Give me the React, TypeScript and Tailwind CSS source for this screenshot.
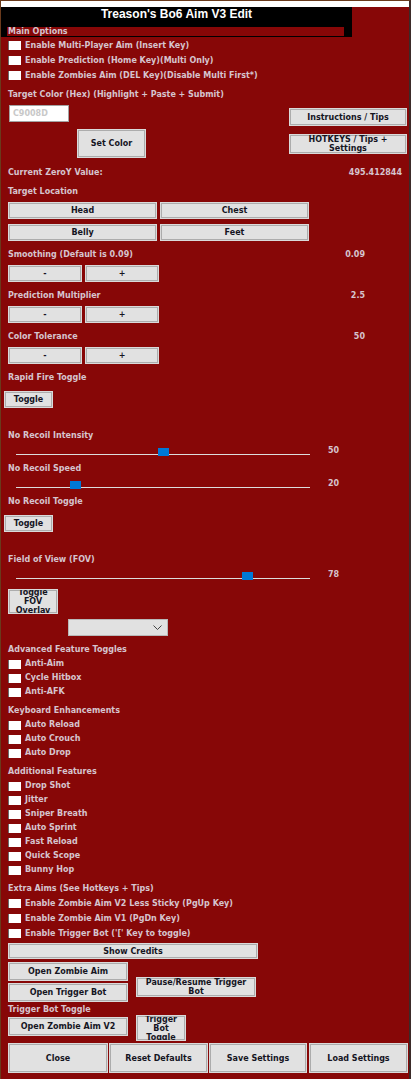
import React from "react";

type BtnProps = { className?: string; children?: React.ReactNode };

function Btn({ className = "", children }: BtnProps) {
  return (
    <div
      className={`flex items-center justify-center text-center bg-[#e1e1e1] border border-[#dadada] shadow-[inset_0_0_0_1px_#acacac] text-[#15151f] leading-[9px] overflow-hidden shrink-0 ${className}`}
    >
      {children}
    </div>
  );
}

function Check({ label, tall = false }: { label: string; tall?: boolean }) {
  return (
    <div className={`flex items-center pl-[7px] ${tall ? "h-[15px]" : "h-[14px]"}`}>
      <div className="w-[13px] h-[9px] bg-white border-l border-[#6b6b6b] shrink-0" />
      <span className="ml-[4px] whitespace-nowrap">{label}</span>
    </div>
  );
}

function Label({ children, className = "" }: { children: React.ReactNode; className?: string }) {
  return <div className={`h-[14px] leading-[14px] pl-[7px] whitespace-nowrap ${className}`}>{children}</div>;
}

function ValueLabel({ label, value }: { label: string; value: string }) {
  return (
    <div className="h-[14px] leading-[14px] pl-[7px] w-[364px] flex justify-between whitespace-nowrap">
      <span>{label}</span>
      <span>{value}</span>
    </div>
  );
}

function PlusMinus() {
  return (
    <div className="mt-[3px] h-[17px] pl-[7px] flex gap-[3px]">
      <Btn className="w-[74px] h-[17px] text-[#8a8a8a]">-</Btn>
      <Btn className="w-[74px] h-[17px]">+</Btn>
    </div>
  );
}

function Slider({ thumb, value }: { thumb: number; value: string }) {
  return (
    <div className="mt-[3px] h-[12px] flex items-start">
      <div className="relative ml-[15px] w-[294px] h-[12px]">
        <div className="absolute left-0 right-0 top-[8px] h-px bg-[#dcdcdc]" />
        <div className="absolute top-[2px] h-[8px] w-[11px] bg-[#0078d7]" style={{ left: thumb }} />
      </div>
      <span className="ml-[18px] leading-[10px]">{value}</span>
    </div>
  );
}

export default function App() {
  return (
    <div className="w-[411px] h-[1079px] bg-[#870707] border-l border-t border-[#6a3a1c] border-r-2 border-r-[#3b2b29] overflow-hidden flex flex-col font-['DejaVu_Sans',sans-serif] font-bold text-[8px] text-[#d6c4ce]">
      {/* top strip */}
      <div className="h-[6px] bg-white shrink-0" />

      {/* header */}
      <div className="w-[351px] h-[30px] bg-black flex flex-col shrink-0">
        <div className="h-[14px] leading-[14px] text-center text-white text-[12px] font-['Liberation_Sans',sans-serif]">
          Treason's Bo6 Aim V3 Edit
        </div>
        <div className="mt-[6px] ml-[6px] w-[337px] h-[9px] leading-[9px] bg-[#870707] pl-[1px]">Main Options</div>
      </div>

      <div className="mt-px">
        <Check tall label="Enable Multi-Player Aim (Insert Key)" />
        <Check tall label="Enable Prediction (Home Key)(Multi Only)" />
        <Check tall label="Enable Zombies Aim (DEL Key)(Disable Multi First*)" />
      </div>

      <Label className="mt-[5px]">Target Color (Hex) (Highlight + Paste + Submit)</Label>

      {/* color block */}
      <div className="h-[56px] flex justify-between shrink-0">
        <div className="flex flex-col">
          <div className="mt-[3px] ml-[8px] w-[60px] h-[17px] bg-white border border-[#a3a3a3] text-[#c8c8c8] leading-[15px] pl-[3px]">
            C9008D
          </div>
          <Btn className="mt-[7px] ml-[76px] w-[69px] h-[29px]">Set Color</Btn>
        </div>
        <div className="flex flex-col mr-[2px]">
          <Btn className="mt-[6px] w-[118px] h-[18px]">Instructions / Tips</Btn>
          <Btn className="mt-[8px] w-[118px] h-[20px]">
            HOTKEYS / Tips +
            <br />
            Settings
          </Btn>
        </div>
      </div>

      <div className="mt-[8px] h-[14px] leading-[14px] pl-[7px] pr-[7px] flex justify-between">
        <span>Current ZeroY Value:</span>
        <span>495.412844</span>
      </div>

      <Label className="mt-[5px]">Target Location</Label>
      <div className="mt-[3px] pl-[7px] flex gap-[3px]">
        <Btn className="w-[149px] h-[17px]">Head</Btn>
        <Btn className="w-[149px] h-[17px]">Chest</Btn>
      </div>
      <div className="mt-[5px] pl-[7px] flex gap-[3px]">
        <Btn className="w-[149px] h-[17px]">Belly</Btn>
        <Btn className="w-[149px] h-[17px]">Feet</Btn>
      </div>

      <div className="mt-[7px]">
        <ValueLabel label="Smoothing (Default is 0.09)" value="0.09" />
      </div>
      <PlusMinus />
      <div className="mt-[7px]">
        <ValueLabel label="Prediction Multiplier" value="2.5" />
      </div>
      <PlusMinus />
      <div className="mt-[7px]">
        <ValueLabel label="Color Tolerance" value="50" />
      </div>
      <PlusMinus />

      <Label className="mt-[7px]">Rapid Fire Toggle</Label>
      <div className="mt-[6px] pl-[3px]">
        <Btn className="w-[49px] h-[17px]">Toggle</Btn>
      </div>

      <Label className="mt-[21px]">No Recoil Intensity</Label>
      <Slider thumb={142} value="50" />
      <Label className="mt-[4px]">No Recoil Speed</Label>
      <Slider thumb={54} value="20" />
      <Label className="mt-[4px]">No Recoil Toggle</Label>
      <div className="mt-[6px] pl-[3px]">
        <Btn className="w-[49px] h-[17px]">Toggle</Btn>
      </div>

      <Label className="mt-[21px]">Field of View (FOV)</Label>
      <Slider thumb={226} value="78" />
      <div className="mt-[7px] pl-[7px]">
        <Btn className="w-[50px] h-[25px]">
          Toggle
          <br />
          FOV
          <br />
          Overlay
        </Btn>
      </div>
      <div className="mt-[5px] ml-[67px] w-[100px] h-[17px] bg-[#e1e1e1] border border-[#b8b8b8] flex items-center justify-end pr-[5px] shrink-0">
        <svg width="9" height="5" viewBox="0 0 9 5" fill="none" stroke="#444" strokeWidth="1">
          <path d="M0.5 0.5 L4.5 4.5 L8.5 0.5" />
        </svg>
      </div>

      <Label className="mt-[7px]">Advanced Feature Toggles</Label>
      <Check label="Anti-Aim" />
      <Check label="Cycle Hitbox" />
      <Check label="Anti-AFK" />

      <Label className="mt-[5px]">Keyboard Enhancements</Label>
      <Check label="Auto Reload" />
      <Check label="Auto Crouch" />
      <Check label="Auto Drop" />

      <Label className="mt-[5px]">Additional Features</Label>
      <Check label="Drop Shot" />
      <Check label="Jitter" />
      <Check label="Sniper Breath" />
      <Check label="Auto Sprint" />
      <Check label="Fast Reload" />
      <Check label="Quick Scope" />
      <Check label="Bunny Hop" />

      <Label className="mt-[5px]">Extra Aims (See Hotkeys + Tips)</Label>
      <Check tall label="Enable Zombie Aim V2 Less Sticky (PgUp Key)" />
      <Check tall label="Enable Zombie Aim V1 (PgDn Key)" />
      <Check tall label="Enable Trigger Bot ('[' Key to toggle)" />

      <div className="mt-[2px] pl-[7px]">
        <Btn className="w-[250px] h-[16px]">Show Credits</Btn>
      </div>

      <div className="mt-[3px] pl-[7px] flex items-start">
        <div className="flex flex-col gap-[2px]">
          <Btn className="w-[120px] h-[19px]">Open Zombie Aim</Btn>
          <Btn className="w-[120px] h-[19px]">Open Trigger Bot</Btn>
        </div>
        <Btn className="mt-[15px] ml-[8px] w-[120px] h-[20px]">
          Pause/Resume Trigger
          <br />
          Bot
        </Btn>
      </div>

      <div className="mt-[3px] h-[10px] leading-[10px] pl-[7px]">Trigger Bot Toggle</div>

      <div className="pl-[7px] h-[26px] flex items-start">
        <Btn className="mt-[2px] w-[120px] h-[19px]">Open Zombie Aim V2</Btn>
        <Btn className="ml-[8px] w-[50px] h-[26px]">
          Trigger
          <br />
          Bot
          <br />
          Toggle
        </Btn>
      </div>

      <div className="mt-[2px] pl-[7px] flex gap-[1px]">
        <Btn className="w-[100px] h-[30px]">Close</Btn>
        <Btn className="w-[99px] h-[30px]">Reset Defaults</Btn>
        <Btn className="w-[98px] h-[30px]">Save Settings</Btn>
        <Btn className="ml-[1px] w-[99px] h-[30px]">Load Settings</Btn>
      </div>
    </div>
  );
}
